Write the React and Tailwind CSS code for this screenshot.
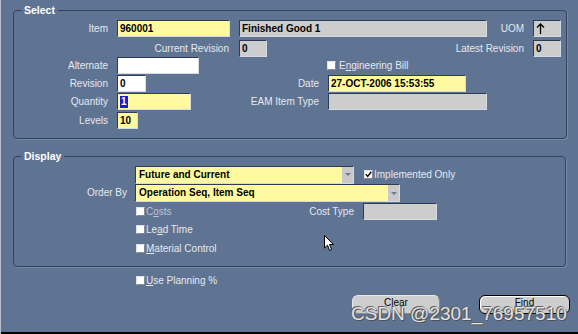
import React from 'react';

const Label = ({ w, children, className = '' }) => (
  <div className={`shrink-0 text-right text-[#e6e9ef] whitespace-nowrap ${className}`} style={{ width: w }}>
    {children}
  </div>
);

const Field = ({ w, kind = 'yellow', children, className = '' }) => {
  const bg =
    kind === 'yellow' ? 'bg-[#fffaa0]' : kind === 'white' ? 'bg-white' : 'bg-[#cdcdcd]';
  return (
    <div
      className={`shrink-0 h-[17px] ${bg} border-t border-l border-[#2f3b50] border-r-[#d6dbe3] border-b-[#d6dbe3] border-r border-b flex items-center pl-[2px] font-bold text-black whitespace-nowrap overflow-hidden ${className}`}
      style={{ width: w }}
    >
      {children}
    </div>
  );
};

const Poplist = ({ w, children }) => (
  <div
    className="shrink-0 h-[18px] bg-[#fffaa0] border-t border-l border-[#2f3b50] border-r border-b border-r-[#d6dbe3] border-b-[#d6dbe3] flex items-center font-bold text-black"
    style={{ width: w }}
  >
    <div className="flex-1 pl-[3px] whitespace-nowrap">{children}</div>
    <div className="w-[11px] h-full bg-[#c9c9c9] flex items-center justify-center">
      <div className="w-0 h-0 border-l-[3px] border-r-[3px] border-t-[3px] border-l-transparent border-r-transparent border-t-[#6e7d96]" />
    </div>
  </div>
);

const Check = ({ checked }) => (
  <div className="shrink-0 w-[9px] h-[9px] bg-white border-r border-b border-[#8a8a8a] border-t border-l border-t-[#e0e0e0] border-l-[#e0e0e0] flex items-center justify-center">
    {checked && (
      <svg width="9" height="9" viewBox="0 0 9 9">
        <path d="M1 4 L3.5 7 L8 1" stroke="#000" strokeWidth="1.8" fill="none" />
      </svg>
    )}
  </div>
);

const Frame = ({ title, className, children }) => (
  <div className={`relative border border-[#34425a] rounded-[4px] shadow-[1px_1px_0_#7688a6] ${className}`}>
    <div className="absolute -top-[7px] left-[7px] px-[3px] bg-[#5f7393] text-white font-bold text-[10.5px] leading-[12px]">
      {title}
    </div>
    {children}
  </div>
);

export default function App() {
  return (
    <div
      className="relative w-[578px] h-[334px] bg-[#5f7393] border-l border-[#b9bfc9] overflow-hidden flex flex-col text-[10px] leading-[12px]"
      style={{ fontFamily: '"Liberation Sans", Arial, sans-serif' }}
    >
      <Frame title="Select" className="mt-[10px] ml-[12px] w-[554px] h-[129px] pt-[9px]">
        <div className="flex items-center h-[17px]">
          <Label w={94}>Item</Label>
          <Field w={113} className="ml-[9px]">960001</Field>
          <Field w={248} kind="gray" className="ml-[9px]">Finished Good 1</Field>
          <Label w={37}>UOM</Label>
          <Field w={28} kind="gray" className="ml-[9px]">
            <svg width="9" height="11" viewBox="0 0 9 11">
              <path d="M4.5 1 L4.5 11 M1 4.5 L4.5 1 L8 4.5" stroke="#000" strokeWidth="1.3" fill="none" />
            </svg>
          </Field>
        </div>
        <div className="flex items-center h-[17px] mt-[3px]">
          <Label w={215}>Current Revision</Label>
          <Field w={28} kind="gray" className="ml-[10px]">0</Field>
          <Label w={257}>Latest Revision</Label>
          <Field w={28} kind="gray" className="ml-[9px]">0</Field>
        </div>
        <div className="flex items-center h-[17px]">
          <Label w={94}>Alternate</Label>
          <Field w={82} kind="white" className="ml-[9px]" />
          <div className="ml-[128px] flex items-center">
            <Check />
            <span className="ml-[3px] text-[#e6e9ef]">
              E<span className="underline">n</span>gineering Bill
            </span>
          </div>
        </div>
        <div className="flex items-center h-[17px] mt-[1px]">
          <Label w={94}>Revision</Label>
          <Field w={29} kind="white" className="ml-[9px]">0</Field>
          <Label w={173}>Date</Label>
          <Field w={138} className="ml-[9px]">27-OCT-2006 15:53:55</Field>
        </div>
        <div className="flex items-center h-[17px] mt-[1px]">
          <Label w={94}>Quantity</Label>
          <Field w={74} className="ml-[9px]">
            <span className="bg-[#1a1ad0] text-white px-[1px]">1</span>
          </Field>
          <Label w={128}>EAM Item Type</Label>
          <Field w={159} kind="gray" className="ml-[9px]" />
        </div>
        <div className="flex items-center h-[17px] mt-[2px]">
          <Label w={94}>Levels</Label>
          <Field w={21} className="ml-[9px]">10</Field>
        </div>
      </Frame>

      <Frame title="Display" className="mt-[17px] ml-[12px] w-[553px] h-[111px] pt-[9px]">
        <div className="flex items-center h-[17px]">
          <div className="ml-[121px]">
            <Poplist w={219}>Future and Current</Poplist>
          </div>
          <div className="ml-[10px] flex items-center">
            <Check checked />
            <span className="ml-[1px] text-[#e6e9ef]">Implemented Only</span>
          </div>
        </div>
        <div className="flex items-center h-[18px] mt-[1px]">
          <Label w={113}>Order By</Label>
          <div className="ml-[8px]">
            <Poplist w={265}>Operation Seq, Item Seq</Poplist>
          </div>
        </div>
        <div className="flex items-center h-[17px] mt-[1px]">
          <div className="ml-[122px] flex items-center w-[96px]">
            <Check />
            <span className="ml-[1px] text-[#bfc6d2]">
              C<span className="underline">o</span>sts
            </span>
          </div>
          <Label w={122}>Cost Type</Label>
          <Field w={74} kind="gray" className="ml-[9px]" />
        </div>
        <div className="flex items-center h-[19px]">
          <div className="ml-[122px] flex items-center">
            <Check />
            <span className="ml-[1px] text-[#e6e9ef]">
              Le<span className="underline">a</span>d Time
            </span>
          </div>
        </div>
        <div className="flex items-center h-[19px]">
          <div className="ml-[122px] flex items-center">
            <Check />
            <span className="ml-[1px] text-[#e6e9ef]">
              <span className="underline">M</span>aterial Control
            </span>
          </div>
        </div>
      </Frame>

      <div className="flex items-center h-[17px] mt-[5px] ml-[135px]">
        <Check />
        <span className="ml-[1px] text-[#e6e9ef]">
          <span className="underline">U</span>se Planning %
        </span>
      </div>

      <div className="flex mt-[6px]">
        <button className="ml-[351px] w-[88px] h-[19px] rounded-[6px] bg-[#cecece] border border-[#e8e8e8] border-b-[#8a8a8a] border-r-[#8a8a8a] text-black text-[10px] leading-[12px] pb-[3px]">
          Clear
        </button>
        <button className="ml-[39px] w-[91px] h-[19px] rounded-[6px] bg-[#cecece] border border-black shadow-[inset_1px_1px_0_#ffffff] text-black text-[10px] leading-[12px] pb-[3px]">
          Find
        </button>
      </div>

      <div className="mt-auto h-[2px] bg-black" />

      <svg className="absolute left-[323px] top-[235px]" width="11" height="17" viewBox="0 0 11 17">
        <path d="M0.5 0.5 L0.5 13 L3.5 10.2 L5.6 15.5 L7.6 14.6 L5.5 9.5 L9.5 9.5 Z" fill="#fff" stroke="#000" strokeWidth="1" />
      </svg>

      <div
        className="absolute left-[350px] top-[303px] text-[19px] leading-[22px] text-white/85 whitespace-nowrap"
        style={{ textShadow: '0 0 1px #444, 1px 1px 0 #555, -1px -1px 0 #666' }}
      >
        CSDN @2301_76957510
      </div>
    </div>
  );
}
